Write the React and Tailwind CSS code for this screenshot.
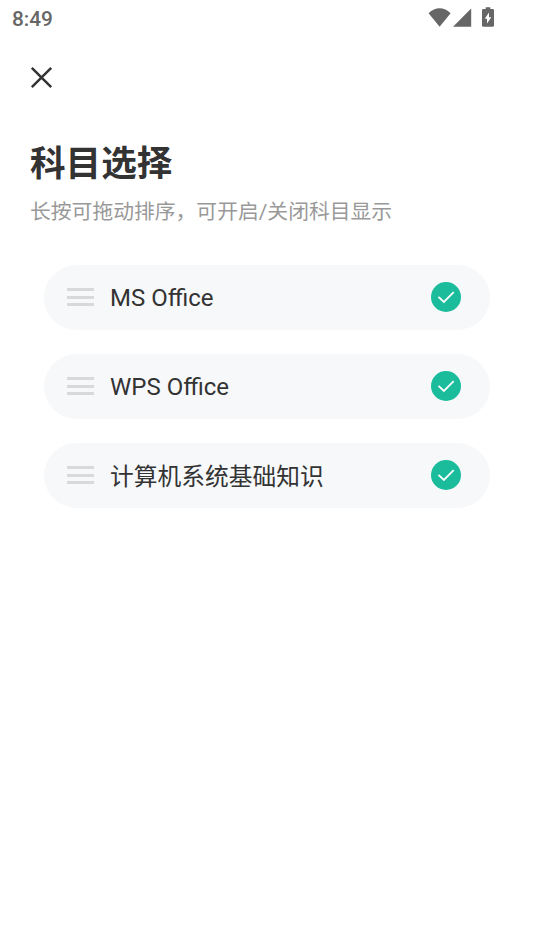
import React, { useState } from "react";

const SUBJECTS = [
  { id: "ms", name: "MS Office" },
  { id: "wps", name: "WPS Office" },
  { id: "basics", name: "计算机系统基础知识", cjk: true },
];

function StatusBar() {
  return (
    <div className="flex h-9 items-center justify-between pl-3 pr-[41px] text-[#666666]">
      <span className="pt-[3px] text-[20.8px] font-medium">8:49</span>
      <div className="flex items-center pb-0.5">
        <svg width="24" height="20" viewBox="0 0 24 20" fill="currentColor">
          <path d="M0.6 6.2C7.2 -0.3 16 -0.3 22.6 6.2L11.6 19.8Z" />
        </svg>
        <svg className="ml-px" width="19" height="20" viewBox="0 0 19 20" fill="currentColor">
          <path d="M18.2 1.6V19.8H0Z" />
        </svg>
        <svg className="ml-2.5" width="12" height="20" viewBox="0 0 12 20" fill="currentColor">
          <path
            fillRule="evenodd"
            d="M3.7 0.3H8.3V2H10.7Q12 2 12 3.3V18.4Q12 19.7 10.7 19.7H1.3Q0 19.7 0 18.4V3.3Q0 2 1.3 2H3.7ZM7 5.5L2.8 11.8H5V16.5L9.3 10.2H7Z"
          />
        </svg>
      </div>
    </div>
  );
}

function SubjectRow({ name, cjk, checked, onToggle }) {
  return (
    <li className="flex h-[65px] items-center rounded-full bg-[#f7f8fa] pl-[23px] pr-[29px]">
      <div className="flex w-[27px] flex-col gap-[4.5px] pb-px">
        <span className="h-[3px] bg-[#d8d9da]" />
        <span className="h-[3px] bg-[#d8d9da]" />
        <span className="h-[3px] bg-[#d8d9da]" />
      </div>
      <span
        className={
          cjk
            ? "ml-4 flex-1 pt-1 text-[23.75px] text-[#333333]"
            : "ml-4 flex-1 text-2xl text-[#333333]"
        }
      >
        {name}
      </span>
      <button
        type="button"
        className="pb-px"
        aria-label={name}
        aria-pressed={checked}
        onClick={onToggle}
      >
        <svg className="block" width="30" height="30" viewBox="0 0 30 30" fill="none">
          <circle cx="15" cy="15" r="15" fill={checked ? "#1abc9c" : "#d8d9da"} />
          <path d="M7.5 14.8L12.9 20L22.7 10.2" stroke="white" strokeWidth="1.8" />
        </svg>
      </button>
    </li>
  );
}

export default function App() {
  const [hidden, setHidden] = useState([]);

  const toggle = (id) =>
    setHidden((prev) => (prev.includes(id) ? prev.filter((x) => x !== id) : [...prev, id]));

  return (
    <div className="min-h-screen bg-white font-[Roboto,'Noto_Sans_CJK_SC',sans-serif]">
      <StatusBar />
      <button type="button" aria-label="关闭" className="ml-[30px] mt-[30px] block">
        <svg width="23" height="23" viewBox="0 0 23 23" stroke="#333333" strokeWidth="2.5">
          <path d="M1.8 1.8L21.2 21.2M21.2 1.8L1.8 21.2" />
        </svg>
      </button>
      <h1 className="ml-[30px] mt-[49px] text-[35.6px] leading-[52px] font-bold text-[#333333]">
        科目选择
      </h1>
      <p className="ml-[30px] mt-[7px] text-[20.8px] leading-[30px] text-[#999999]">
        长按可拖动排序，可开启/关闭科目显示
      </p>
      <ul className="ml-11 mr-[45px] mt-[38px] flex flex-col gap-6">
        {SUBJECTS.map((s) => (
          <SubjectRow
            key={s.id}
            name={s.name}
            cjk={s.cjk}
            checked={!hidden.includes(s.id)}
            onToggle={() => toggle(s.id)}
          />
        ))}
      </ul>
    </div>
  );
}
